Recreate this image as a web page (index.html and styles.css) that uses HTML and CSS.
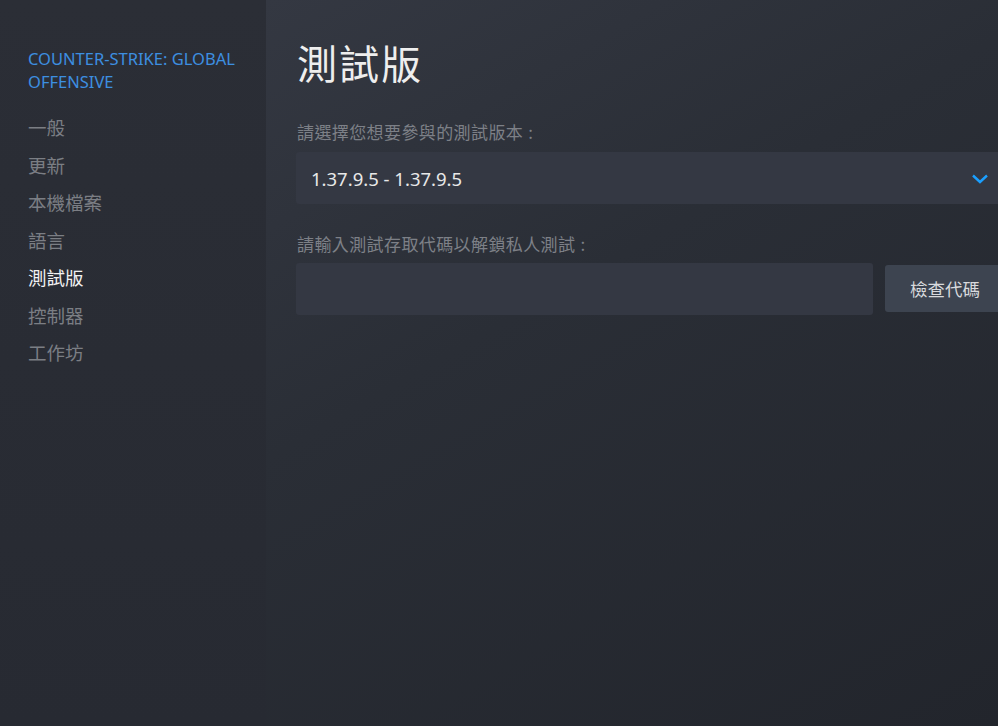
FILE: index.html
```html
<!DOCTYPE html>
<html lang="zh-Hant">
<head>
<meta charset="utf-8">
<link rel="stylesheet" href="styles.css">
</head>
<body>
<div class="app">
  <aside class="sidebar">
    <div class="game-title">COUNTER-STRIKE: GLOBAL OFFENSIVE</div>
    <nav class="nav">
      <div class="nav-item">一般</div>
      <div class="nav-item">更新</div>
      <div class="nav-item">本機檔案</div>
      <div class="nav-item">語言</div>
      <div class="nav-item active">測試版</div>
      <div class="nav-item">控制器</div>
      <div class="nav-item">工作坊</div>
    </nav>
  </aside>
  <main class="main">
    <h1 class="page-title">測試版</h1>
    <div class="field-label">請選擇您想要參與的測試版本<span class="colon">:</span></div>
    <div class="dropdown">
      <span class="dropdown-value">1.37.9.5 - 1.37.9.5</span>
      <svg class="chevron" width="18" height="10" viewBox="0 0 18 10"><path d="M2 1.5 L9 8 L16 1.5" fill="none" stroke="#1a9fff" stroke-width="2.4"/></svg>
    </div>
    <div class="field-label second">請輸入測試存取代碼以解鎖私人測試<span class="colon">:</span></div>
    <div class="code-row">
      <div class="code-input"></div>
      <button class="check-btn">檢查代碼</button>
    </div>
  </main>
</div>
</body>
</html>
```
FILE: styles.css
```css
html, body {
  margin: 0;
  padding: 0;
  height: 100%;
  overflow: hidden;
}
body {
  font-family: "Noto Sans", "Noto Sans CJK TC", sans-serif;
  background: #23262e;
}
.app {
  display: flex;
  width: 998px;
  height: 726px;
}
.sidebar {
  width: 266px;
  flex: none;
  background: linear-gradient(180deg, #2b2e36 0%, #272a32 100%);
  padding: 47px 0 0 28px;
  box-sizing: border-box;
}
.game-title {
  color: #3d8fe0;
  font-size: 16.5px;
  line-height: 23px;
  width: 220px;
  margin-bottom: 16px;
}
.nav {
  display: flex;
  flex-direction: column;
}
.nav-item {
  font-family: "Noto Sans CJK TC", sans-serif;
  color: #7b7e84;
  font-size: 18.5px;
  line-height: 37.5px;
  height: 37.5px;
}
.nav-item.active {
  color: #f2f2f2;
}
.main {
  flex: 1;
  min-width: 0;
  background: linear-gradient(150deg, #343842 0%, #2a2e36 40%, #22252c 100%);
  padding: 34px 0 0 30px;
  box-sizing: border-box;
}
.page-title {
  font-family: "Noto Sans CJK TC", sans-serif;
  font-weight: 400;
  font-size: 40px;
  line-height: 56px;
  margin: 0 0 0 1px;
  color: #eeeeee;
  letter-spacing: 2px;
}
.field-label {
  font-family: "Noto Sans CJK TC", sans-serif;
  color: #7d8087;
  font-size: 17px;
  letter-spacing: 0.4px;
  line-height: 24px;
  margin: 30px 0 8px 1px;
}
.field-label.second {
  margin-top: 28px;
  margin-bottom: 7px;
}
.colon {
  display: inline-block;
  margin-left: 5px;
}
.dropdown {
  height: 52px;
  background: #343843;
  border-radius: 3px 0 0 3px;
  display: flex;
  align-items: center;
  justify-content: space-between;
  padding: 0 9px 0 15px;
}
.dropdown-value {
  color: #e8e8e8;
  font-size: 18.5px;
}
.chevron {
  display: block;
  margin-top: 2px;
}
.code-row {
  display: flex;
  align-items: center;
  gap: 12px;
}
.code-input {
  width: 577px;
  height: 52px;
  background: #343843;
  border-radius: 3px;
  flex: none;
}
.check-btn {
  flex: 1;
  height: 47px;
  margin-top: -1px;
  border: none;
  border-radius: 3px 0 0 3px;
  background: #3d4450;
  color: #d8dadd;
  font-family: "Noto Sans CJK TC", sans-serif;
  font-size: 17.5px;
  text-align: left;
  padding: 0 0 0 25px;
}
```
